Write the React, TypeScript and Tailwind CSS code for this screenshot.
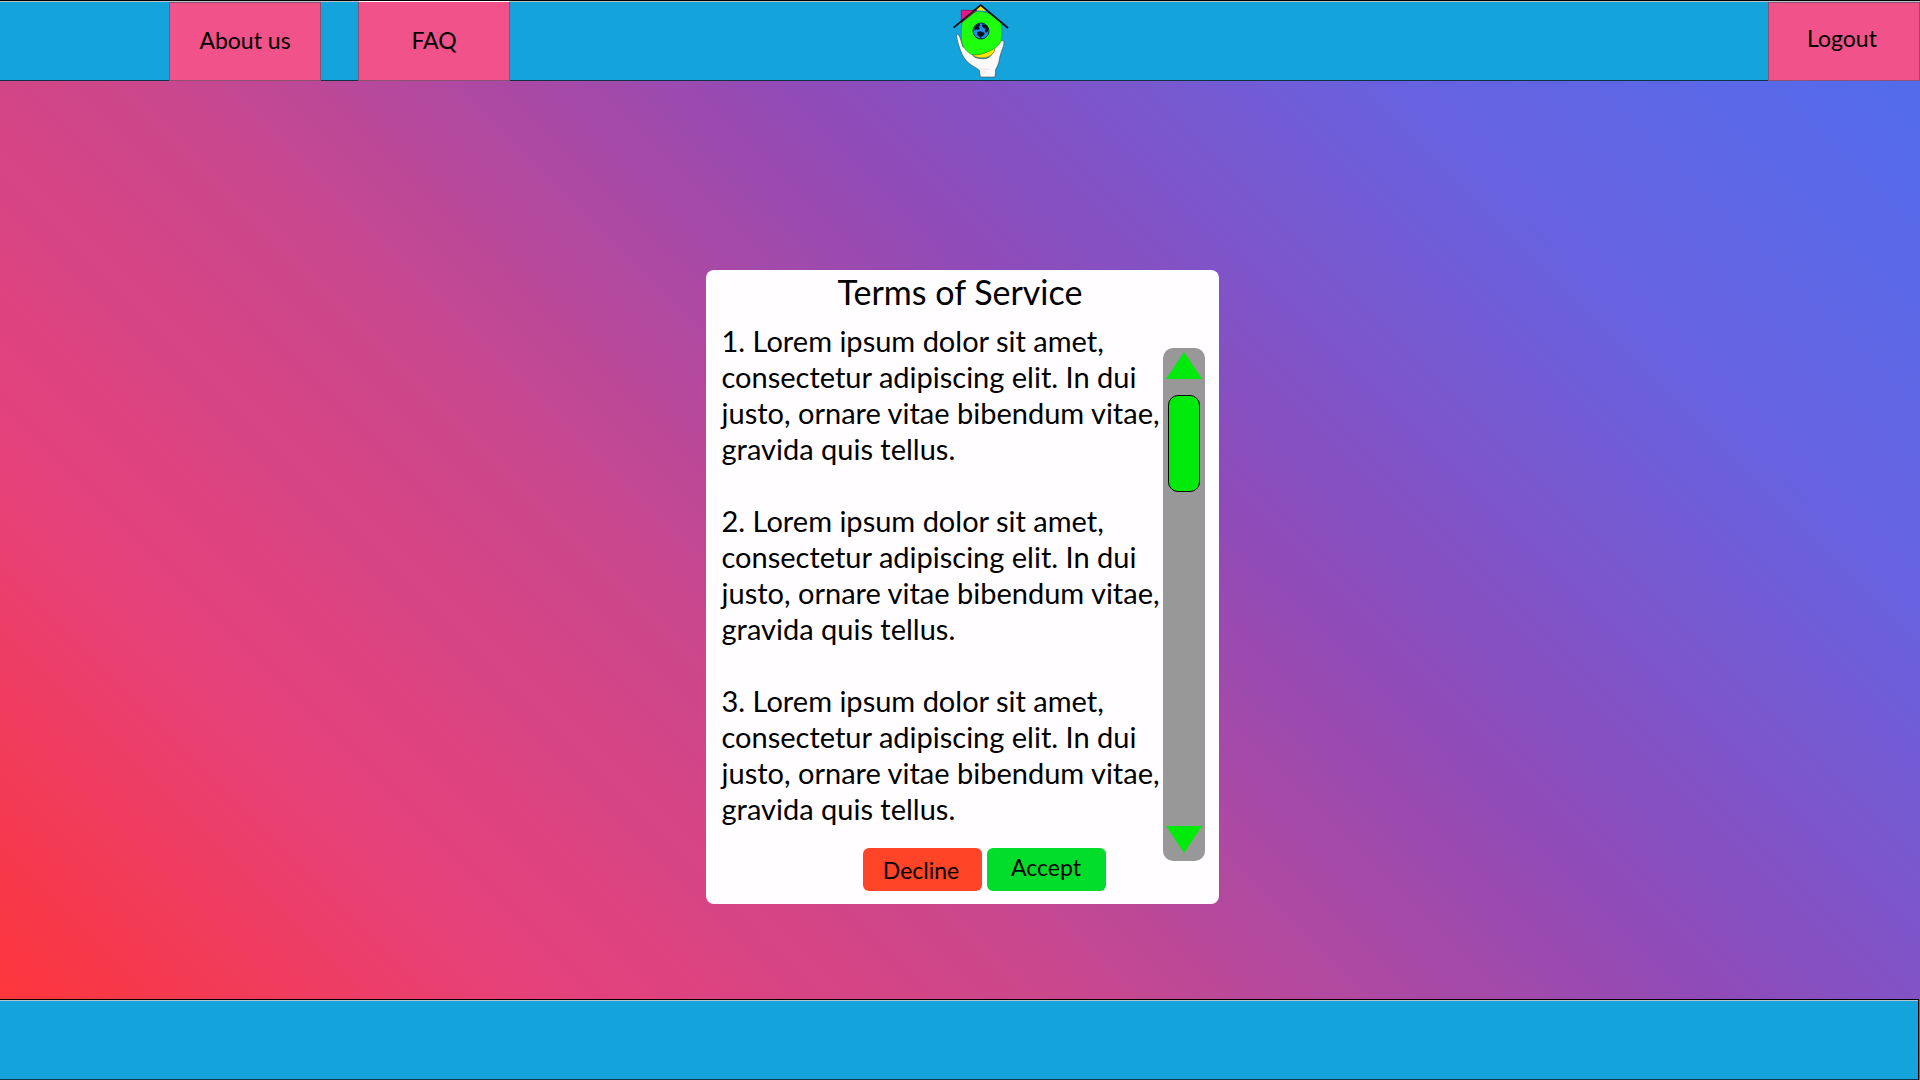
const clause =
  "Lorem ipsum dolor sit amet, consectetur adipiscing elit. In dui justo, ornare vitae bibendum vitae, gravida quis tellus.";

const terms = [1, 2, 3].map((n) => `${n}. ${clause}`);

function Logo() {
  return (
    <svg
      viewBox="30 6 180 234"
      className="h-[78px] w-[60px]"
      role="img"
      aria-label="Home in a caring hand"
    >
      <path d="M108 31L122 17L140 33Z" fill="#ffe100" />
      <path
        d="M50 104C54 101 58 106 61 116L69 142C72 138 76 138 80 143L94 161C99 168 104 173 114 175C127 178 141 177 150 170C160 160 163 150 165 140L172 127C177 121 191 119 192 126C192 140 184 152 180 168C178 180 176 194 167 208L165 231H121L118 211C108 202 96 198 86 189C73 178 66 164 61 150C56 136 49 112 50 104Z"
        fill="#fdfafc"
        stroke="#333"
        strokeWidth="1.5"
      />
      <path d="M122 208H146M126 216H138" stroke="#fbdfe6" strokeWidth="4" />
      <path d="M98 164C118 166 142 158 165 143C166 158 150 172 132 173C116 174 103 171 98 164Z" fill="#ffe100" stroke="#6d6a10" strokeWidth="1.5" />
      <path
        d="M67 66L78 58L104 37C112 34 132 34 146 40L182 66C187 80 187 108 183 122C180 136 160 149 142 156C124 163 104 168 92 162C76 152 66 140 65 118C63 98 64 80 67 66Z"
        fill="#1dff0c"
        stroke="#1f8f1c"
        strokeWidth="1.5"
      />
      <path d="M64 31H110L64 68Z" fill="#f0148c" stroke="#6b1040" strokeWidth="2" />
      <circle cx="123" cy="93" r="24" fill="#1f8fe6" stroke="#06253f" strokeWidth="3" />
      <path
        d="M103 84L108 76L118 71L121 76L116 80L120 85L114 90L108 88L104 92ZM128 72L138 75L145 85L144 94L138 98L134 92L138 86L130 84L126 78ZM112 96L122 94L134 99L132 106L126 109L122 115L117 109L112 104Z"
        fill="#04101c"
      />
      <path d="M41 83L122 15L204 84" fill="none" stroke="#0a0a0a" strokeWidth="5" />
    </svg>
  );
}

function ScrollArrow({ label, points }: { label: string; points: string }) {
  return (
    <button type="button" aria-label={label} className="block">
      <svg viewBox="0 0 36 27" className="h-[27px] w-9" aria-hidden="true">
        <polygon points={points} fill="#00ea0b" />
      </svg>
    </button>
  );
}

function Header() {
  return (
    <header className="border-t border-black">
      <nav
        aria-label="Main"
        className="grid h-20 grid-cols-[1fr_auto_1fr] border-t border-b border-t-[#b8c4cc] border-b-[#0f3446] bg-[#14a3da]"
      >
        <div className="-mb-px flex gap-[37px] pl-[169px]">
          <button
            type="button"
            className="w-[152px] border border-[#8c5070] bg-[#f05289] pb-1 text-[23px] leading-7"
          >
            About us
          </button>
          <button
            type="button"
            className="-mt-px w-[152px] border border-[#8c5070] border-t-white bg-[#f05289] pb-0.5 text-[23px] leading-7"
          >
            FAQ
          </button>
        </div>
        <div className="pl-10">
          <Logo />
        </div>
        <div className="-mb-px flex justify-end">
          <button
            type="button"
            className="w-[152px] border border-[#8c5070] bg-[#f05289] pr-1 pb-2 text-[23px] leading-7"
          >
            Logout
          </button>
        </div>
      </nav>
    </header>
  );
}

function TermsCard() {
  return (
    <section
      aria-labelledby="terms-title"
      className="w-[513px] rounded-lg bg-[#fffdff] pb-[13px]"
    >
      <h1 id="terms-title" className="mb-[9px] pr-1 text-center text-[34px] leading-11">
        Terms of Service
      </h1>
      <div className="flex pr-3.5">
        <div className="flex-1 pl-4">
          <div className="flex flex-col gap-9 text-[29px] leading-9">
            {terms.map((term) => (
              <p key={term}>{term}</p>
            ))}
          </div>
          <div className="mt-[21px] flex gap-[5px] pl-[141px] text-[23px] leading-7">
            <button type="button" className="h-[43px] w-[119px] rounded-md bg-[#ff4427] pr-0.5">
              Decline
            </button>
            <button type="button" className="h-[43px] w-[119px] rounded-md bg-[#02dc2b] pb-1.5">
              Accept
            </button>
          </div>
        </div>
        <div className="mt-[25px] mb-[30px] flex w-[42px] flex-col items-center justify-between rounded-[10px] bg-[#989898] pt-1 pb-2">
          <div className="flex flex-col items-center gap-4">
            <ScrollArrow label="Scroll up" points="18,0 36,27 0,27" />
            <div className="h-[97px] w-8 rounded-[10px] border border-black bg-[#00ea0b]" />
          </div>
          <ScrollArrow label="Scroll down" points="0,0 36,0 18,27" />
        </div>
      </div>
    </section>
  );
}

export default function App() {
  return (
    <div className="flex min-h-screen flex-col bg-[linear-gradient(45deg,#ff3434_1%,#e64179_20%,#cb478c_38%,#8f4bb8_60%,#6762e0_80%,#516ceb_98%)] font-['Lato',sans-serif] text-black">
      <Header />
      <main className="flex flex-1 items-start justify-center pt-[189px] pl-1">
        <TermsCard />
      </main>
      <footer className="mr-px border-t border-r border-black">
        <div className="h-20 border-t border-b border-t-[#b8c4cc] border-b-[#0f3446] bg-[#14a3da]" />
      </footer>
    </div>
  );
}
